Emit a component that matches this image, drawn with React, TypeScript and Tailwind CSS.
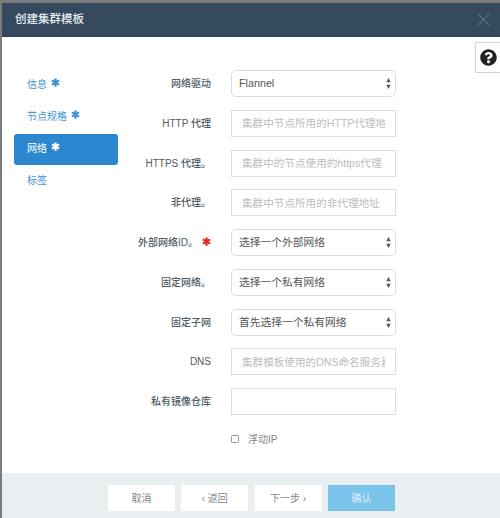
import type { FC, ReactNode } from 'react';
import { FaQuestionCircle } from 'react-icons/fa';

const tabs = [
  { name: '信息', required: true },
  { name: '节点规格', required: true },
  { name: '网络', required: true, active: true },
  { name: '标签', required: false },
];

const Star: FC<{ className?: string }> = ({ className = '' }) => (
  <svg viewBox="0 0 12 12" className={`h-[9px] w-[9px] ${className}`} fill="none" stroke="currentColor" strokeWidth="3">
    <path d="M6 0.5V11.5M1.2 3.2L10.8 8.8M10.8 3.2L1.2 8.8" />
  </svg>
);

const SelectArrows = () => (
  <svg viewBox="0 0 6 14" className="h-[11px] w-[5px] text-[#555]" fill="currentColor">
    <path d="M3 0L5.8 5.5H0.2ZM3 14L0.2 8.5H5.8Z" />
  </svg>
);

const Row: FC<{ label: string; required?: boolean; children: ReactNode }> = ({ label, required, children }) => (
  <div className="flex h-[27px] items-center">
    <div className="flex w-[93px] items-center justify-end whitespace-nowrap text-[10px] font-medium text-[#4f5b66]">
      {label}
      {required && <Star className="ml-[4px] mb-[3px] text-[#e8261c]" />}
    </div>
    <div className="ml-5 h-full w-[165px]">{children}</div>
  </div>
);

const SelectBox: FC<{ value: string }> = ({ value }) => (
  <div className="flex h-full items-center justify-between rounded-[5px] border border-[#d9dde0] bg-white pl-[7px] pr-[4px] text-[10.75px] text-[#555]">
    <span>{value}</span>
    <SelectArrows />
  </div>
);

const TextBox: FC<{ placeholder?: string }> = ({ placeholder }) => (
  <input
    readOnly
    placeholder={placeholder}
    className="block h-full w-full border border-[#dcdfe1] bg-white px-[10px] text-[10.6px] outline-none placeholder:text-[#bdbdbd]"
  />
);

const FooterButton: FC<{ label: string; primary?: boolean }> = ({ label, primary }) => (
  <button
    className={`h-[26px] w-[67px] text-[10px] ${primary ? 'border border-[#79c0e8] bg-[#7cc5ea] text-[#d9eef9]' : 'bg-white text-[#7d8890]'}`}
  >
    {label}
  </button>
);

export default function App() {
  return (
    <div className="relative flex h-[518px] w-[500px] flex-col overflow-hidden bg-white font-['Liberation_Sans','Noto_Sans_CJK_SC',sans-serif]">
      <div className="h-[3px] bg-[#7b7b7b]" />
      <div className="flex min-h-0 flex-1">
        <div className="w-[2px] bg-[#7b7b7b]" />
        <div className="flex min-w-0 flex-1 flex-col">
          <header className="flex h-[34px] items-center justify-between border-b border-[#2f4358] bg-[#34495e] pl-[13px] pr-[10px]">
            <h1 className="text-[11.5px] font-medium text-[#e6ebef]">创建集群模板</h1>
            <svg viewBox="0 0 14 14" className="h-[13px] w-[13px] text-[#5c7186]" fill="none" stroke="currentColor" strokeWidth="1.3">
              <path d="M1 1L13 13M13 1L1 13" />
            </svg>
          </header>

          <div className="relative flex flex-1 pt-[33px]">
            <nav className="ml-3 flex w-[104px] shrink-0 flex-col gap-px">
              {tabs.map(tab => (
                <div
                  key={tab.name}
                  className={`flex h-[31px] items-center gap-[4px] rounded-[3px] pb-[2px] pl-[13px] text-[10px] ${tab.active ? 'bg-[#2b88d0] text-white' : 'text-[#3f92d2]'}`}
                >
                  {tab.name}
                  {tab.required && <Star className="mb-[4px]" />}
                </div>
              ))}
            </nav>
            <div className="flex flex-col gap-[12.75px]">
              <Row label="网络驱动"><SelectBox value="Flannel" /></Row>
              <Row label="HTTP 代理"><TextBox placeholder="集群中节点所用的HTTP代理地址" /></Row>
              <Row label="HTTPS 代理。"><TextBox placeholder="集群中的节点使用的https代理" /></Row>
              <Row label="非代理。"><TextBox placeholder="集群中节点所用的非代理地址" /></Row>
              <Row label="外部网络ID。" required><SelectBox value="选择一个外部网络" /></Row>
              <Row label="固定网络。"><SelectBox value="选择一个私有网络" /></Row>
              <Row label="固定子网"><SelectBox value="首先选择一个私有网络" /></Row>
              <Row label="DNS"><TextBox placeholder="集群模板使用的DNS命名服务器" /></Row>
              <Row label="私有镜像仓库"><TextBox /></Row>
              <div className="ml-[113px] mt-[4px] flex items-center gap-[9px] text-[10px] text-[#7d8890]">
                <span className="h-[8px] w-[8px] rounded-[1.5px] border border-[#8a949b] bg-white" />
                浮动IP
              </div>
            </div>
            <div className="absolute right-0 top-[5px] flex h-[31px] w-[25px] items-center border border-r-0 border-[#d5d5d5] bg-white pl-[4px]">
              <FaQuestionCircle className="h-[17px] w-[17px] text-[#222]" />
            </div>
          </div>

          <footer className="flex h-[45px] shrink-0 items-start gap-[6.3px] bg-[#e9eff0] pl-[106px] pt-[12px]">
            <FooterButton label="取消" />
            <FooterButton label="‹ 返回" />
            <FooterButton label="下一步 ›" />
            <FooterButton label="确认" primary />
          </footer>
        </div>
      </div>
    </div>
  );
}
